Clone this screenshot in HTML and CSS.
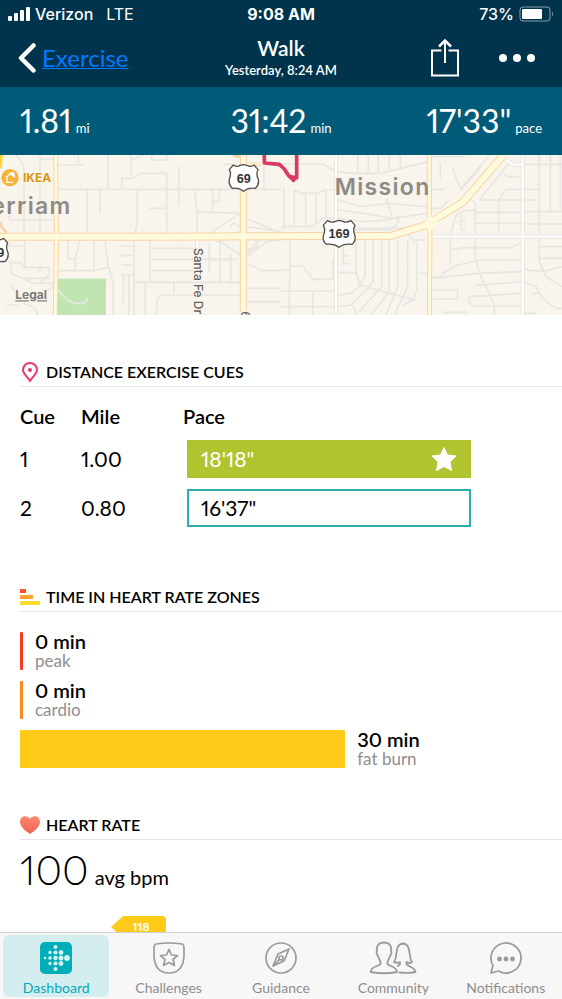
FILE: index.html
```html
<!DOCTYPE html>
<html lang="en">
<head>
  <meta charset="UTF-8">
  <meta name="viewport" content="width=device-width, initial-scale=1.0">
  <title>Walk</title>
  <link rel="stylesheet" href="styles.css">
</head>
<body>
  <header class="top">
    <div class="status">
      <div class="status-left">
        <svg width="22" height="14" viewBox="0 0 22 14" fill="#fff" aria-hidden="true">
          <rect x="0" y="9" width="4" height="5" rx="1"/>
          <rect x="6" y="6" width="4" height="8" rx="1"/>
          <rect x="12" y="3" width="4" height="11" rx="1"/>
          <rect x="18" y="0" width="4" height="14" rx="1"/>
        </svg>
        <span>Verizon</span>
        <span class="network">LTE</span>
      </div>
      <div class="clock">9:08 AM</div>
      <div class="status-right">
        <span>73%</span>
        <svg width="35" height="16" viewBox="0 0 35 16" aria-hidden="true">
          <rect x="1" y="1" width="30" height="14" rx="3" fill="none" stroke="#8b9eaa" stroke-width="1"/>
          <rect x="3" y="3" width="20" height="10" rx="1" fill="#fff"/>
          <path d="M33 5.500q2 2.500 0 5z" fill="#8b9eaa"/>
        </svg>
      </div>
    </div>
    <nav class="nav">
      <a class="back" href="#">
        <svg width="18" height="30" viewBox="0 0 18 30" fill="none" stroke="#fff" stroke-width="4.500" stroke-linecap="round" stroke-linejoin="round" aria-hidden="true"><path d="M15.500 2.500L3 15l12.500 12.500"/></svg>
        <span>Exercise</span>
      </a>
      <div class="title">
        <h1>Walk</h1>
        <p>Yesterday, 8:24 AM</p>
      </div>
      <div class="actions">
        <button aria-label="Share">
          <svg width="28" height="38" viewBox="0 0 28 38" fill="none" stroke="#fff" stroke-width="2" aria-hidden="true">
            <path d="M10.500 11.500H1V36.500H27V11.500H17.500M14 24V1.500"/>
            <path d="M8 7.500L14 1.500L20 7.500" stroke-width="2.500"/>
          </svg>
        </button>
        <button aria-label="More">
          <svg width="36" height="8" viewBox="0 0 36 8" fill="#fff" aria-hidden="true"><circle cx="4" cy="4" r="4"/><circle cx="18" cy="4" r="4"/><circle cx="32" cy="4" r="4"/></svg>
        </button>
      </div>
    </nav>
  </header>

  <div class="stats">
    <div><strong>1.81</strong><span>mi</span></div>
    <div><strong>31:42</strong><span>min</span></div>
    <div><strong>17'33"</strong><span>pace</span></div>
  </div>

  <main class="content">
    <svg class="map" viewBox="0 15 1686 480" preserveAspectRatio="xMidYMid slice" role="img" aria-label="Route map">
      <rect y="0" width="1686" height="500" fill="#f9f5ed"/>
      <rect x="170" y="386" width="148" height="112" fill="#c1e5b0"/>
      <!-- side streets, west half -->
      <g fill="none" stroke="#e7e6e2" stroke-width="5" stroke-linejoin="round">
        <path d="M50 15L72 50V245M120 15V245M120 28H165M165 45H250M235 15V45M170 118H725M262 118V245M300 118V192M412 118V215L405 250M28 210H165M28 190V210M325 15V118M365 118V85H400L418 70H500V250M393 15V75M393 30L430 15M455 15V30H500V15M536 48V170M448 175H500M584 118L592 190V250M592 185L720 190M638 118V180M638 155H658V118M670 43H705V118M792 40V118M735 118H843"/>
        <path d="M74 270V350M20 288H74M204 270V327H224M240 270L226 325V362M282 270V360M172 362H282L325 352L315 270M325 350L340 400M340 400V495M370 375V460M386 375V495M358 288H400M365 317H400M365 345H400M365 375H400M402 270V495M450 270V395M402 397H723M450 295H590M450 328H710M450 362H590M522 397V430M470 495V450L485 435H720M436 397V495M628 280V368M660 270V395M692 315V397M740 320L800 275L843 270M740 340L785 362H843M740 415H843M740 455H843M30 338L35 370L100 400H165M30 338H60L75 352H145L150 370L120 400M75 385H150M120 352V367M30 405L60 440M70 460L100 470L115 495M20 465H55M140 425L165 405"/>
        <path d="M630 250L720 190M650 278L715 245L790 260M738 205L843 250M740 230L843 245M738 320Q755 285 790 265M660 275L722 315M692 230Q700 210 725 235M740 270Q775 255 770 290Q755 310 740 290"/>
      </g>
      <path d="M170 418L205 452Q230 464 252 460L264 445" fill="none" stroke="#e3eadb" stroke-width="6"/>
      <!-- side streets, east half -->
      <g transform="translate(843 0)" fill="none" stroke="#e7e6e2" stroke-width="5" stroke-linejoin="round">
        <path d="M0 42H125L165 65M170 65L210 70H300L440 35M230 15V68M262 15V68M292 15V68M325 15V65M358 15V55M40 120L60 130H105L135 120H165M40 120V230M74 132V230M105 130V220M135 120V205M0 230H95L125 205H165M8 110V240M170 150L240 170L320 160L440 170M170 180L250 190L330 205L440 190M170 205L250 215L320 210L355 200L350 220L325 240H220M318 145L332 200M450 20H550M478 40V85M515 50L525 85L540 115L625 15M450 118H490M450 175H480L505 148M540 120L600 50M565 145L583 158V250M595 150L690 32M595 150H775M653 150V250M653 150L675 118H775M665 70L680 80H720M730 43H843M775 15V250M808 15V185M838 15V185M730 185H843M583 187H720M583 220H720M730 222H843M510 250L525 195L550 182H583M540 195V240M540 213H555M540 240H555"/>
        <path d="M27 270V400M0 360H27M27 348H65L95 388H155V325M187 270V345M187 318H205M187 340H205M225 270V370L235 400M252 270V380L235 405M277 270V395L210 465M302 270V410L235 485M325 270V425L270 495M350 270V410L315 495M380 270V410L340 495M408 275V420L395 450L365 465M225 235H370L395 270H440M170 368H225L238 405L325 430L405 450M170 435L210 430L240 405M170 470L215 465L230 495M0 423H165M95 423V495M0 470H165M25 390V495M415 370H440M508 265V345M508 300L550 293H690L720 280M455 382H480L485 370L530 345L600 330H720M455 385L590 370L720 365M583 265V330L600 380L640 465V495M585 406L720 395M565 440L720 430M565 440V460L580 468H720M455 420H530V447H455M485 487H555M775 265V335L795 380L843 410M775 290H843M730 355L745 362H800L843 350M730 395L765 410L785 445L825 475H843M730 490H765M755 430H775M775 325H843"/>
      </g>
      <g fill="none" stroke="#e0ded9" stroke-width="11"><path d="M1008 15V495M1568 15V495M1295 260H1686M1510 25L1541 44H1568M592 265V300"/></g>
      <g fill="none" stroke="#fff" stroke-width="7"><path d="M1008 15V495M1568 15V495M1295 260H1686M1510 25L1541 44H1568M592 265V300"/></g>
      <!-- main roads: casing first, fill on top -->
      <g fill="none" stroke="#f8d4a4">
        <path d="M0 260H500L1175 257L1275 226L1388 157L1511 15" stroke-width="24"/>
        <path d="M730 15V495" stroke-width="21"/>
        <path d="M730 43H785M700 15Q710 22 722 18" stroke-width="10"/>
        <path d="M167 15L169 260L166 495M1288 15V190L1290 260L1288 495" stroke-width="15"/>
        <path d="M0 215Q4 235 20 248" stroke-width="8"/>
      </g>
      <g fill="none" stroke="#fefadb">
        <path d="M0 260H500L1175 257L1275 226L1388 157L1511 15" stroke-width="18"/>
        <path d="M730 15V495" stroke-width="15"/>
        <path d="M730 43H785" stroke-width="5"/>
        <path d="M167 15L169 260L166 495M1288 15V190L1290 260L1288 495" stroke-width="9"/>
      </g>
      <path d="M1288 185Q1286 210 1268 222L1288 245L1318 215Q1295 210 1288 185Z" fill="#fefadb"/>
      <path d="M4 15L0 55" stroke="#ffd33d" stroke-width="10"/>
      <path d="M793 13V39L838 43L853 57L866 77L881 91M890 13V84L874 80" fill="none" stroke="#d83a63" stroke-width="11" stroke-linecap="round" stroke-linejoin="round"/>

      <circle cx="30" cy="83" r="26" fill="#f6b33c"/>
      <path d="M17 97H40M23 94L19 82L31 71" fill="none" stroke="#fff" stroke-width="4" stroke-linejoin="round"/>
      <path d="M27 70L41 67L44 82Z" fill="#fff" stroke="#fff" stroke-width="3" stroke-linejoin="round"/>
      <g class="map-text">
        <text class="shop" x="69" y="96">IKEA</text>
        <text class="town" x="-26" y="192">erriam</text>
        <text class="town" x="1004" y="136">Mission</text>
        <text class="place" x="46" y="448">Legal</text>
        <text class="street" transform="translate(583 294) rotate(90)">Santa Fe Dr</text>
        <text class="street" transform="translate(723 484) rotate(90)">65</text>
      </g>
      <!-- highway shields -->
      <g fill="#fff" stroke="#54514e" stroke-width="4" stroke-linejoin="round">
        <path id="shield" d="M700 45Q713 53 720 46L730 44L741 46Q749 53 762 45L774 59Q767 71 775 88Q778 105 766 115Q744 112 731 124Q716 112 697 115Q685 105 688 88Q695 71 688 59Z"/>
        <path d="M982 212Q997 220 1006 214L1017 211L1029 214Q1038 220 1053 212L1065 226Q1057 240 1065 257Q1068 274 1056 283Q1032 280 1017 292Q1001 280 979 283Q967 274 970 257Q978 240 970 226Z"/>
        <use href="#shield" x="-751" y="220"/>
      </g>
      <g class="map-text shield-text">
        <text x="731" y="98">69</text>
        <text x="1017" y="265">169</text>
        <text x="-8" y="320">69</text>
      </g>
    </svg>

    <section class="section">
      <h2>
        <svg width="20" height="20" viewBox="0 0 20 20" fill="none" stroke="#e9386b" stroke-width="2" aria-hidden="true"><path d="M10 19C8 15 3 12 3 8a7 7 0 0 1 14 0C17 12 12 15 10 19Z"/><circle cx="10" cy="8" r="2" fill="#e9386b" stroke="none"/></svg>
        Distance exercise cues
      </h2>
      <table class="cues">
        <thead>
          <tr><th class="cue">Cue</th><th class="mile">Mile</th><th>Pace</th></tr>
        </thead>
        <tbody>
          <tr>
            <td>1</td>
            <td>1.00</td>
            <td>
              <div class="pace best" style="width: 75%">18'18"
                <svg width="26" height="26" viewBox="0 0 26 26" fill="#fff" stroke="#fff" stroke-linejoin="round" aria-label="Best"><path d="M13 1.500L16.500 9L25 10L19 16L20.500 24.500L13 20.500L5.500 24.500L7 16L1 10L9.500 9Z"/></svg>
              </div>
            </td>
          </tr>
          <tr>
            <td>2</td>
            <td>0.80</td>
            <td><div class="pace" style="width: 75%">16'37"</div></td>
          </tr>
        </tbody>
      </table>
    </section>

    <section class="section">
      <h2>
        <svg width="20" height="18" viewBox="0 0 20 18" aria-hidden="true"><path d="M0 1h6v4H0z" fill="#f9502c"/><path d="M0 7h13v4H0z" fill="#fba32f"/><path d="M0 13h20v4H0z" fill="#fddb2c"/></svg>
        Time in heart rate zones
      </h2>
      <ul class="zones">
        <li><div class="zone-bar peak"></div><p><strong>0 min</strong><span>peak</span></p></li>
        <li><div class="zone-bar cardio"></div><p><strong>0 min</strong><span>cardio</span></p></li>
        <li><div class="zone-bar fat-burn" style="width: 60%"></div><p><strong>30 min</strong><span>fat burn</span></p></li>
      </ul>
    </section>

    <section class="section">
      <h2>
        <svg width="20" height="18" viewBox="0 0 20 18" aria-hidden="true">
          <defs><linearGradient id="heart" x2="0" y2="1"><stop stop-color="#f98a72"/><stop offset="1" stop-color="#ee6450"/></linearGradient></defs>
          <path d="M10 18C7 16 0 11 0 6C0-1 8-1 10 3C12-1 20-1 20 6C20 11 13 16 10 18Z" fill="url(#heart)"/>
        </svg>
        Heart rate
      </h2>
      <p class="bpm"><strong>100</strong> avg bpm</p>
      <div class="chart"><span class="zone-tag">118</span></div>
    </section>
  </main>

  <nav class="tabs">
    <a class="tab active" href="#">
      <svg width="34" height="34" viewBox="0 0 34 34" aria-hidden="true">
        <rect x="1" y="1" width="32" height="32" rx="5" fill="#00aeb8"/>
        <g fill="#d5f1f2"><circle cx="6" cy="17" r="1.300"/><circle cx="11" cy="11.500" r="1.700"/><circle cx="11" cy="17" r="1.800"/><circle cx="11" cy="22.500" r="1.700"/><circle cx="16.500" cy="6" r="2"/><circle cx="16.500" cy="11.500" r="2.100"/><circle cx="16.500" cy="17" r="2.200"/><circle cx="16.500" cy="22.500" r="2.100"/><circle cx="16.500" cy="28" r="2"/><circle cx="22" cy="11.500" r="2.400"/><circle cx="22" cy="17" r="2.500"/><circle cx="22" cy="22.500" r="2.400"/><circle cx="28" cy="17" r="2.900"/></g>
      </svg>
      <span>Dashboard</span>
    </a>
    <a class="tab" href="#">
      <svg width="34" height="34" viewBox="0 0 34 34" fill="none" stroke="#9b9b9b" stroke-width="1.700" stroke-linejoin="round" aria-hidden="true"><path d="M4 3Q17 1 30 3Q32 3.500 32 7V15Q31 32 17 32Q3 32 2 15V7Q2 3.500 4 3Z"/><path d="M17 8.500L19.500 14L25.500 14.500L21 18.500L22.500 24.500L17 21.500L11.500 24.500L13 18.500L8.500 14.500L14.500 14Z"/></svg>
      <span>Challenges</span>
    </a>
    <a class="tab" href="#">
      <svg width="34" height="34" viewBox="0 0 34 34" fill="none" stroke="#9b9b9b" stroke-width="1.700" stroke-linejoin="round" aria-hidden="true"><circle cx="17" cy="17" r="15"/><path d="M25 8L20 20L9 25L14 13Z"/><circle cx="17" cy="17" r="2"/><path d="M9 25L15.500 18.500"/></svg>
      <span>Guidance</span>
    </a>
    <a class="tab" href="#">
      <svg width="48" height="34" viewBox="0 0 48 34" fill="none" stroke="#9b9b9b" stroke-width="1.800" stroke-linejoin="round" stroke-linecap="round" aria-hidden="true"><path d="M15 1.500C9 1.500 7 6 8 10C7 11 8 14 9 15C10 19 12 19 11.500 23C10 25.500 2 25 1.500 31Q15 33.500 28 31C27.500 25 20 25.500 18.500 23C18 19 20 19 21 15C22 14 23 11 22 10C23 6 21 1.500 15 1.500Z"/><path d="M25 21C29 17 25 3 34 2.500C43 3 39 17 43 21C41 22.500 39 22 37.500 21V23C39 26 46 26 46.500 31Q39 32.500 30.500 31.500M25 21Q28 22.500 31 21V23L29 25"/></svg>
      <span>Community</span>
    </a>
    <a class="tab" href="#">
      <svg width="34" height="34" viewBox="0 0 34 34" fill="none" stroke="#9b9b9b" stroke-width="1.700" stroke-linejoin="round" aria-hidden="true"><path d="M9.500 30A15 15 0 1 0 4 24.500L2 32Z"/><g fill="#9b9b9b" stroke="none"><circle cx="10.500" cy="18" r="2.400"/><circle cx="17" cy="18" r="2.400"/><circle cx="23.500" cy="18" r="2.400"/></g></svg>
      <span>Notifications</span>
    </a>
  </nav>
</body>
</html>
```

FILE: styles.css
```css
:root {
  --navy: #00334c;
  --teal: #005b78;
  --gutter: 20px;
  --line: #e8e8e8;
  --muted: #8e8e8e;
}
* { box-sizing: border-box; }
body {
  margin: 0;
  height: 100vh;
  display: flex;
  flex-direction: column;
  font-family: Lato, "Open Sans", sans-serif;
  font-variant-numeric: proportional-nums;
  color: #000;
  background: #fff;
}
h1, h2, p, ul {
  margin: 0;
  padding: 0;
}
svg {
  display: block;
  flex-shrink: 0;
}

/* header */
.top {
  background: var(--navy);
  color: #fff;
}
.status,
.nav,
.stats {
  display: grid;
  grid-template-columns: 1fr auto 1fr;
  align-items: center;
}
.status {
  height: 28px;
  padding: 0 8px;
  font-family: Inter, sans-serif;
  font-size: 16px;
  font-weight: 500;
}
.status-left,
.status-right {
  display: flex;
  align-items: center;
  gap: 5px;
}
.status-right { justify-content: flex-end; }
.network {
  margin-left: 8px;
  font-weight: 400;
}
.clock { font-weight: 700; }
.nav {
  height: 59px;
  padding: 0 18px;
}
.back {
  display: flex;
  align-items: center;
  gap: 6px;
  color: #007aff;
  font-size: 24px;
  line-height: 26px;
  text-decoration-thickness: 1px;
}
.title { text-align: center; }
.title h1 {
  font-size: 21px;
  line-height: 24px;
  font-weight: 600;
}
.title p {
  font-size: 13px;
  line-height: 20px;
  font-weight: 600;
}
.actions {
  display: flex;
  justify-content: flex-end;
  align-items: center;
  gap: 40px;
  padding-right: 9px;
}
.actions button {
  padding: 0;
  border: 0;
  background: none;
  cursor: pointer;
}

/* totals */
.stats {
  height: 68px;
  padding: 0 var(--gutter);
  background: var(--teal);
  color: #fff;
  font-size: 13px;
}
.stats div {
  display: flex;
  align-items: baseline;
  gap: 4px;
}
.stats div:last-child { justify-content: flex-end; }
.stats strong {
  font-size: 32px;
  font-weight: 400;
  line-height: 40px;
}

.content {
  flex: 1;
  min-height: 0;
  overflow-y: auto;
  scrollbar-width: none;
}

/* map */
.map {
  width: 100%;
  height: 160px;
}
.map-text {
  font-family: Inter, sans-serif;
  font-weight: 600;
  stroke: #f9f5ed;
  stroke-width: 6px;
  paint-order: stroke;
}
.town {
  font-size: 69px;
  letter-spacing: 4px;
  fill: #8e8b87;
}
.shop {
  font-size: 36px;
  font-weight: 700;
  fill: #dc9514;
}
.place {
  font-size: 36px;
  font-weight: 700;
  fill: #7d7a76;
  text-decoration: underline;
}
.street {
  font-size: 36px;
  font-weight: 500;
  fill: #65625f;
}
.shield-text {
  font-family: "Liberation Sans", sans-serif;
  font-size: 38px;
  font-weight: 700;
  text-anchor: middle;
  fill: #333;
  stroke: none;
}

/* sections */
.section { padding: 42px 0 0 var(--gutter); }
.section h2 {
  display: flex;
  align-items: center;
  gap: 6px;
  height: 30px;
  border-bottom: 1px solid var(--line);
  font-size: 16px;
  font-weight: 600;
  text-transform: uppercase;
}

.cues {
  width: 100%;
  margin-bottom: 8px;
  border-collapse: collapse;
  table-layout: fixed;
  font-size: 21px;
}
.cues th {
  height: 47px;
  padding: 11px 0 0;
  font-size: 20px;
  font-weight: 600;
  text-align: left;
}
.cues td {
  height: 49px;
  padding: 0;
}
.cues .cue { width: 61px; }
.cues .mile { width: 102px; }
.pace {
  display: flex;
  align-items: center;
  justify-content: space-between;
  height: 38px;
  margin-left: 4px;
  padding: 0 12px;
  border: 2px solid #2caeb4;
}
.pace.best {
  border-color: #afc22e;
  background: #b1c430;
  color: #fff;
}

.zones {
  display: grid;
  gap: 11px;
  padding-top: 20px;
  list-style: none;
}
.zones li {
  display: flex;
  align-items: center;
  gap: 12px;
  height: 38px;
}
.zones strong,
.zones span {
  display: block;
  line-height: 20px;
}
.zones strong {
  font-size: 20px;
  font-weight: 600;
}
.zones span {
  font-size: 17px;
  color: var(--muted);
}
.zone-bar {
  width: 3px;
  height: 38px;
  border-radius: 1px;
}
.peak { background: #f93b1d; }
.cardio { background: #fc8a1c; }
.fat-burn { background: #ffcb18; }

.bpm {
  display: flex;
  align-items: baseline;
  gap: 6px;
  font-size: 20px;
}
.bpm strong {
  font-size: 41px;
  font-weight: 300;
  line-height: 60px;
}
.chart {
  height: 120px;
  padding: 16px 0 0 91px;
}
.zone-tag {
  display: block;
  width: 55px;
  height: 22px;
  padding-left: 5px;
  border-radius: 4px;
  clip-path: polygon(0 50%, 22% 0, 100% 0, 100% 100%, 22% 100%);
  background: #ffcb18;
  color: #fff;
  font-size: 12px;
  font-weight: 700;
  line-height: 22px;
  text-align: center;
}

/* tab bar */
.tabs {
  display: grid;
  grid-template-columns: repeat(5, 1fr);
  border-top: 1px solid #cfcfcf;
  background: #f7f7f7;
}
.tab {
  display: flex;
  flex-direction: column;
  align-items: center;
  gap: 5px;
  margin: 2px 3px;
  padding: 6px 0 1px;
  border-radius: 6px;
  color: var(--muted);
  font-size: 14px;
  line-height: 16px;
  text-decoration: none;
}
.tab.active {
  background: #d4edef;
  color: #00aab5;
}
```
